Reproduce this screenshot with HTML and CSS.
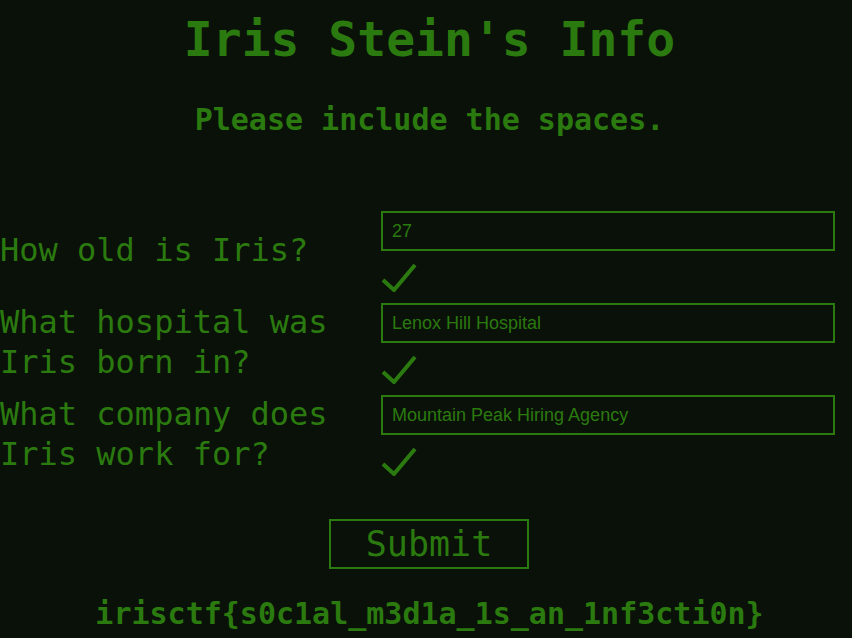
FILE: index.html
```html
<!DOCTYPE html>
<html lang="en">
<head>
<meta charset="utf-8">
<title>Iris Stein's Info</title>
<link rel="stylesheet" href="styles.css">
</head>
<body>
<main class="page">
  <h1 class="title centered">Iris Stein's Info</h1>
  <p class="subtitle centered">Please include the spaces.</p>
  <form class="quiz">
    <div class="row">
      <label class="question" for="q1">How old is Iris?</label>
      <div class="answer">
        <input class="field" id="q1" type="text" value="27">
        <svg class="check" width="36" height="30" viewBox="0 0 36 30"><polyline points="2,18 13,28 34,3"/></svg>
      </div>
    </div>
    <div class="row">
      <label class="question" for="q2">What hospital was Iris born in?</label>
      <div class="answer">
        <input class="field" id="q2" type="text" value="Lenox Hill Hospital">
        <svg class="check" width="36" height="30" viewBox="0 0 36 30"><polyline points="2,18 13,28 34,3"/></svg>
      </div>
    </div>
    <div class="row">
      <label class="question" for="q3">What company does Iris work for?</label>
      <div class="answer">
        <input class="field" id="q3" type="text" value="Mountain Peak Hiring Agency">
        <svg class="check" width="36" height="30" viewBox="0 0 36 30"><polyline points="2,18 13,28 34,3"/></svg>
      </div>
    </div>
    <div class="submit-wrap">
      <button class="submit" type="button">Submit</button>
    </div>
  </form>
  <p class="flag centered">irisctf{s0c1al_m3d1a_1s_an_1nf3cti0n}</p>
</main>
</body>
</html>
```

FILE: styles.css
```css
html, body {
  margin: 0;
  padding: 0;
  background: #0a1109;
}
body {
  width: 852px;
  height: 638px;
  overflow: hidden;
  color: #2b7a0f;
  font-family: "DejaVu Sans Mono", "Liberation Mono", monospace;
}
.page {
  display: flex;
  flex-direction: column;
}
.centered {
  text-align: center;
  padding-left: 7px;
}
.title {
  margin: 11px 0 0;
  font-size: 48px;
  line-height: 56px;
  font-weight: bold;
}
.subtitle {
  margin: 35px 0 0;
  font-size: 30px;
  line-height: 35px;
  font-weight: bold;
}
.quiz {
  margin-top: 74px;
  width: 835px;
  display: flex;
  flex-direction: column;
  gap: 11px;
}
.row {
  display: grid;
  grid-template-columns: 381px 1fr;
  align-items: center;
}
.question {
  font-size: 32px;
  line-height: 40px;
  margin-top: -4px;
}
.answer {
  display: flex;
  flex-direction: column;
  align-items: flex-start;
}
.field {
  box-sizing: border-box;
  width: 100%;
  height: 40px;
  margin: 0;
  padding: 0 9px;
  border: 2px solid #2b7a0f;
  border-radius: 0;
  background: transparent;
  color: #2b7a0f;
  font-family: "Liberation Sans", Arial, sans-serif;
  font-size: 18px;
  outline: none;
}
.check {
  display: block;
  margin-top: 11px;
}
.check polyline {
  fill: none;
  stroke: #2b7a0f;
  stroke-width: 4;
}
.submit-wrap {
  margin-top: 32px;
  width: 852px;
  display: flex;
  justify-content: center;
  padding-left: 6px;
  box-sizing: border-box;
}
.submit {
  box-sizing: border-box;
  width: 200px;
  height: 50px;
  margin: 0;
  padding: 0;
  border: 2px solid #2b7a0f;
  border-radius: 0;
  background: transparent;
  color: #2b7a0f;
  font-family: "DejaVu Sans Mono", "Liberation Mono", monospace;
  font-size: 35px;
  line-height: 46px;
}
.flag {
  margin: 27px 0 0;
  font-size: 30px;
  line-height: 35px;
  font-weight: bold;
}
```
